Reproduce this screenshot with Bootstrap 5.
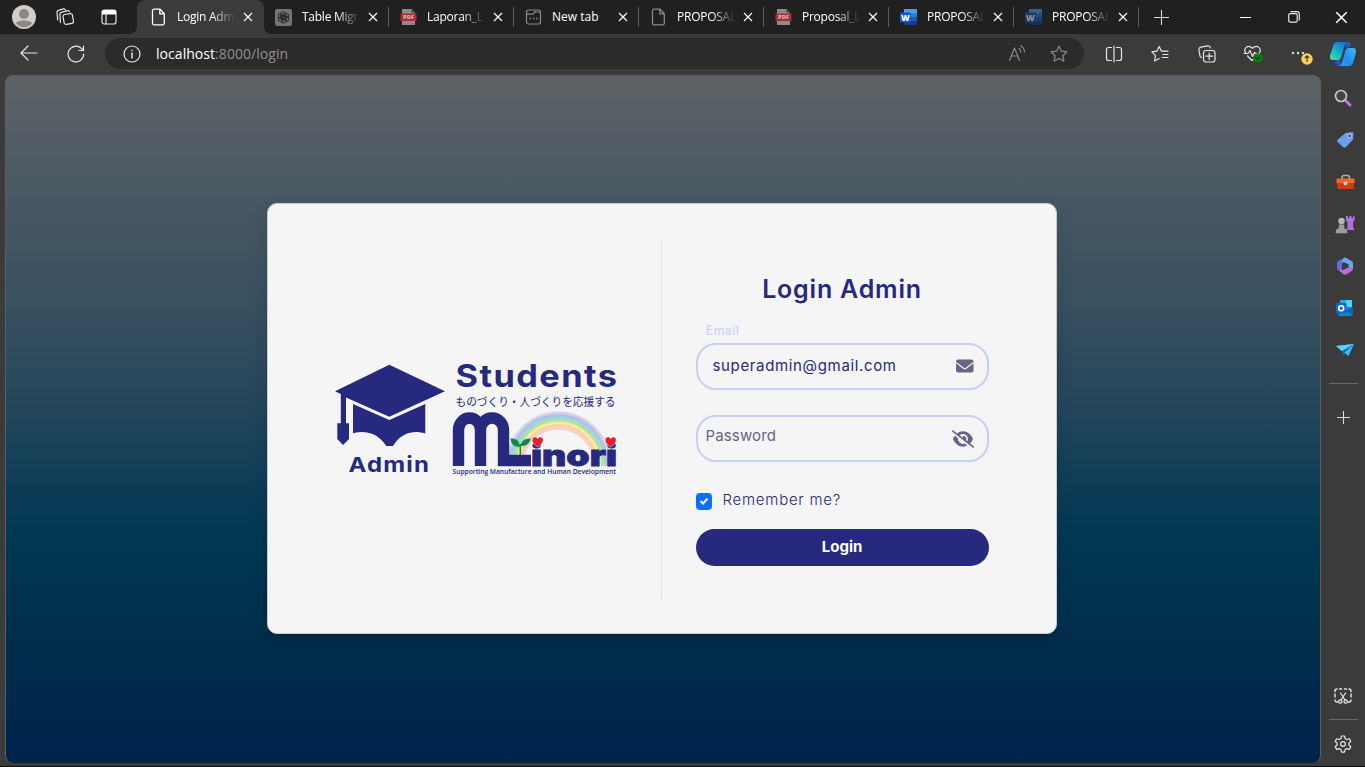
<!DOCTYPE html>
<html lang="en">
<head>
<meta charset="utf-8">
<meta name="viewport" content="width=device-width, initial-scale=1">
<title>Login Admin</title>
<link href="https://cdn.jsdelivr.net/npm/bootstrap@5.3.0/dist/css/bootstrap.min.css" rel="stylesheet">
<style>
:root{--navy:#27297e;--chrome:#3b3b3b}
html,body{height:100%;overflow:hidden}
body{background:var(--chrome);color:#fff;font-family:"Open Sans","Noto Sans",sans-serif;border-bottom:1px solid #0c0c0c}
svg{display:block;flex:none}
.ln{fill:none;stroke:#e6e6e6;stroke-width:1.2;stroke-linecap:round;stroke-linejoin:round}
.dim{stroke:#8a8a8a}
.titlebar{height:34px;background:#202020}
.lead-icons{width:139px}
.slot{display:flex;align-items:center;justify-content:center;flex:none}
.tab{width:125px;height:34px;padding-left:11px;position:relative;flex:none}
.tab>svg:first-child{width:17px}
.tab:not(.on):after{content:"";position:absolute;right:0;top:7px;width:1px;height:20px;background:#5a5a5a}
.tab.on{background:var(--chrome);border-radius:8px 8px 0 0;box-shadow:-2px 0 0 0 var(--chrome)}
.tab.on:before,.tab.on:after{content:"";position:absolute;bottom:0;width:7px;height:7px}
.tab.on:before{left:-9px;background:radial-gradient(circle at 0 0,transparent 6.5px,var(--chrome) 7px)}
.tab.on:after{right:-7px;background:radial-gradient(circle at 100% 0,transparent 6.5px,var(--chrome) 7px)}
.tab .cap{font-size:12px;letter-spacing:-.25px;line-height:16px;width:58px;margin-left:10px;white-space:nowrap;overflow:hidden;-webkit-mask-image:linear-gradient(90deg,#000 60%,transparent)}
.tab .cap.full{-webkit-mask-image:none}
.tab .x{margin-left:8px}
.toolbar{height:41px}
.address{width:979px;height:31px;border-radius:16px;background:#2b2b2b;margin-top:4px}
.url{font-size:14px;letter-spacing:.05px;line-height:18px;color:#8f8f8f}
.url b{font-weight:400;color:#fff}
.viewport{width:1316px;height:688px;margin-left:5px;border-radius:8px;border:1px solid #5a6065;border-bottom:0;
 background:linear-gradient(#5d6264 0,#5a6162 3%,#575e66 6%,#4f5b63 12%,#465763 20%,#38505f 33%,#26475b 47%,#0d3d56 60%,#003753 68%,#002e4c 82%,#00284c 91%,#00234c 100%)}
.login-card{width:790px;height:431px;margin-top:-2px;margin-left:-3px;padding:34px 35px 34px 33px;background:#f5f5f5;border:1px solid #c9ccce;border-radius:10px;box-shadow:0 8px 16px rgba(0,0,0,.15);font-family:Inter,"Open Sans",sans-serif;color:var(--navy)}
.form-side{border-left:1px solid #dfe0e2;padding:34px 32px 0 34px}
.heading{font-size:25px;font-weight:600;line-height:34px;letter-spacing:.8px}
.hint{font-size:12.5px;line-height:16px;letter-spacing:.35px;color:#ccd2ff;font-weight:500;padding-left:10px;margin-top:17px;margin-bottom:4px}
.pill{height:47px;border:2px solid #c7cefb;border-radius:20px}
.pill span{font-size:15px;line-height:20px}
.tick{width:16px;height:17px;border-radius:4px;background:#0d6efd}
.remember{font-size:15px;line-height:20px;font-weight:300}
.btn-login{height:37px;border-radius:19px;background:var(--navy);color:#fff;font-size:15px;font-weight:700;padding:0}
.btn-login:hover{background:#1e2068;color:#fff}
.side{width:44px;padding-top:2px}
.side .slot{height:42px;width:44px}
.side .rule{width:29px;height:1px;background:#686868}
</style>
</head>
<body class="d-flex flex-column">
<svg width="0" height="0" class="position-absolute">
 <defs>
  <symbol id="x" viewBox="0 0 10 10"><path d="M1 1l8 8M9 1L1 9" fill="none" stroke="#fff" stroke-width="1.2"/></symbol>
  <symbol id="page" viewBox="0 0 16 18"><path d="M3.500 1.200h6l4.300 4.500v9.600a1.500 1.500 0 0 1-1.500 1.500H3.500A1.500 1.500 0 0 1 2 15.300V2.700A1.500 1.500 0 0 1 3.500 1.200zM9.300 1.400v4.500h4.400" fill="none" stroke="currentColor" stroke-width="1.300"/></symbol>
  <symbol id="pdf" viewBox="0 0 16 16"><path d="M1.500 0h9.500l3.500 3.500V16h-13z" fill="#8b8b8b"/><path d="M11 0l3.500 3.500H11z" fill="#444"/><path d="M0 4.500h16v7.500H0z" fill="#a82f33"/><text x="8" y="10.400" font-size="5.800" font-weight="800" font-family="Open Sans" text-anchor="middle" fill="#d0b4b4">PDF</text></symbol>
  <symbol id="word" viewBox="0 0 17 16"><path d="M4 0h13v5H4z" fill="#41a5ee"/><path d="M4 4.500h13v4H4z" fill="#2b7cd3"/><path d="M4 8h13v4H4z" fill="#185abd"/><path d="M4 12h13v4H4z" fill="#103f91"/><rect y="3.500" width="11" height="10" rx="1" fill="#1656b9"/><text x="5.500" y="11.700" font-size="8.500" font-weight="800" font-family="Open Sans" text-anchor="middle" fill="#fff">W</text></symbol>
  <linearGradient id="cA" x1="0" y1="1" x2=".7" y2="0"><stop offset="0" stop-color="#5bdf86"/><stop offset=".45" stop-color="#15b9c8"/><stop offset="1" stop-color="#0a78e0"/></linearGradient>
  <linearGradient id="cB" x1="1" y1="0" x2="0" y2="1"><stop offset="0" stop-color="#43b8f8"/><stop offset=".6" stop-color="#1c8cf2"/><stop offset="1" stop-color="#20b5f0"/></linearGradient>
 </defs>
</svg>

<header class="titlebar d-flex align-items-center">
 <div class="lead-icons d-flex align-items-center">
  <div class="slot" style="width:48px"><svg width="24" height="24" viewBox="0 0 24 24"><circle cx="12" cy="12" r="12" fill="#d0cdca"/><circle cx="12" cy="9" r="5" fill="#8b8784"/><path d="M4 18.500c1-4 15-4 16 0a10.500 10.500 0 0 1-16 0z" fill="#8b8784"/></svg></div>
  <div class="slot" style="width:34px"><svg width="18" height="18" viewBox="0 0 18 18" class="ln"><rect x="7.500" y="6" width="9.500" height="10" rx="2" transform="rotate(-10 12 11)"/><path d="M4.500 14.500L3.900 6.600a2 2 0 0 1 1.500-2.200l6.300-1.700a1.500 1.500 0 0 1 1.800 1.100M1.700 12L1 4.500a2 2 0 0 1 1.500-2.200L7.500.9a1.500 1.500 0 0 1 1.800 1"/></svg></div>
  <div class="slot" style="width:54px"><svg width="16" height="16" viewBox="0 0 16 16"><rect x="1" y="1" width="14" height="14" rx="2.200" class="ln" stroke-width="1.600"/><path d="M1 3a2 2 0 0 1 2-2h10a2 2 0 0 1 2 2v2.500H1z" fill="#fff"/><path d="M5 5v10" class="ln"/></svg></div>
 </div>
 <nav class="d-flex">
  <div class="tab on d-flex align-items-center"><svg width="16" height="18"><use href="#page"/></svg><div class="cap">Login Adm</div><svg class="x" width="10" height="10"><use href="#x"/></svg></div>
  <div class="tab d-flex align-items-center"><svg width="17" height="17" viewBox="0 0 17 17"><rect width="17" height="17" rx="2" fill="#747474"/><g fill="none" stroke="#292929" stroke-width="1"><path id="petal" d="M6 9.800V5.500a2.700 2.700 0 0 1 5-1.300L7.300 6.300v3.500"/><use href="#petal" transform="rotate(60 8.500 8.500)"/><use href="#petal" transform="rotate(120 8.500 8.500)"/><use href="#petal" transform="rotate(180 8.500 8.500)"/><use href="#petal" transform="rotate(240 8.500 8.500)"/><use href="#petal" transform="rotate(300 8.500 8.500)"/></g></svg><div class="cap">Table Migr</div><svg class="x" width="10" height="10"><use href="#x"/></svg></div>
  <div class="tab d-flex align-items-center"><svg width="16" height="16"><use href="#pdf"/></svg><div class="cap">Laporan_L</div><svg class="x" width="10" height="10"><use href="#x"/></svg></div>
  <div class="tab d-flex align-items-center"><svg width="16" height="16" viewBox="0 0 16 16"><path d="M3 1h5.500L10 3h3.500A1.500 1.500 0 0 1 15 4.500v8.500a2 2 0 0 1-2 2H3a2 2 0 0 1-2-2V3a2 2 0 0 1 2-2zM1 5.200h6.500L9.500 3M10 1h3a2 2 0 0 1 2 2" class="ln dim"/><path d="M4 9.500h1.500M7.300 9.500h1.500M10.600 9.500h1.500" stroke="#8a8a8a" stroke-width="1.500"/></svg><div class="cap full" style="letter-spacing:0">New tab</div><svg class="x" width="10" height="10"><use href="#x"/></svg></div>
  <div class="tab d-flex align-items-center"><svg width="16" height="18" style="color:#8a8a8a"><use href="#page"/></svg><div class="cap">PROPOSAL</div><svg class="x" width="10" height="10"><use href="#x"/></svg></div>
  <div class="tab d-flex align-items-center"><svg width="16" height="16"><use href="#pdf"/></svg><div class="cap">Proposal_L</div><svg class="x" width="10" height="10"><use href="#x"/></svg></div>
  <div class="tab d-flex align-items-center"><svg width="17" height="16"><use href="#word"/></svg><div class="cap">PROPOSAL</div><svg class="x" width="10" height="10"><use href="#x"/></svg></div>
  <div class="tab d-flex align-items-center"><svg width="17" height="16" opacity=".5"><use href="#word"/></svg><div class="cap">PROPOSAL</div><svg class="x" width="10" height="10"><use href="#x"/></svg></div>
 </nav>
 <div class="slot" style="width:45px"><svg width="15" height="15" viewBox="0 0 15 15"><path d="M7.500 0v15M0 7.500h15" stroke="#ddd" stroke-width="1.100"/></svg></div>
 <div class="ms-auto d-flex">
  <div class="slot" style="width:48px"><svg width="11" height="11" viewBox="0 0 11 11"><path d="M0 5.500h11" stroke="#fff"/></svg></div>
  <div class="slot" style="width:49px"><svg width="12" height="12" viewBox="0 0 12 12" class="ln"><rect x=".7" y="2.700" width="8.500" height="8.500" rx="1.500"/><path d="M3 .7h6a2.300 2.300 0 0 1 2.300 2.300v6"/></svg></div>
  <div class="slot" style="width:47px"><svg width="13" height="13"><use href="#x"/></svg></div>
 </div>
</header>

<div class="toolbar d-flex">
 <div class="slot" style="width:58px;height:38px"><svg width="18" height="16" viewBox="0 0 18 16" class="ln"><path d="M17 8H1.200M8 1L1 8l7 7"/></svg></div>
 <div class="slot" style="width:35px;height:39px"><svg width="18" height="18" viewBox="0 0 18 18" class="ln"><path d="M16.700 9a7.800 7.800 0 1 1-2.500-5.700L16.300 5M16.500 1v4.500H12"/></svg></div>
 <div class="address d-flex align-items-center" style="margin-left:12px">
  <div class="slot" style="width:54px"><svg width="18" height="18" viewBox="0 0 18 18" class="ln"><circle cx="9" cy="9" r="8"/><path d="M9 8v5M9 5.200v.2" stroke-width="1.500"/></svg></div>
  <div class="url" style="margin-left:-3px"><b>localhost</b>:8000/login</div>
  <div class="slot ms-auto" style="width:34px"><svg width="18" height="17" viewBox="0 0 18 17" class="ln dim"><path d="M1.500 15.500L6.500 3l5 12.500M3.200 11h6.600M11 3.500c1.200.8 1.800 2 1.800 3.500M12.500.8C15 2.200 16.500 4.200 16.500 7"/></svg></div>
  <div class="slot" style="width:50px;height:31px"><svg width="18" height="18" viewBox="0 0 18 18" class="ln dim"><path d="M9 1.200l2.400 5 5.500.7-4 3.800 1 5.500L9 13.500l-4.900 2.700 1-5.500-4-3.800 5.500-.7z"/></svg></div>
 </div>
 <div class="slot" style="width:59px;height:39px"><svg width="18" height="18" viewBox="0 0 18 18" class="ln"><path d="M6.500 2.500h-3a2 2 0 0 0-2 2v9a2 2 0 0 0 2 2h3M11.500 2.500h3a2 2 0 0 1 2 2v9a2 2 0 0 1-2 2h-3M9 1v16"/></svg></div>
 <div class="slot" style="width:34px;height:39px"><svg width="18" height="18" viewBox="0 0 18 18" class="ln"><path d="M10.500 6.200h6.500M12 9.500h5M11 12.500h6M10.500 6.200L8.200 1.500 5.800 6.200.9 6.900l3.600 3.700-.9 5.400 4.600-2.500"/></svg></div>
 <div class="slot" style="width:59px;height:39px"><svg width="18" height="18" viewBox="0 0 18 18" class="ln"><rect x="5.500" y="5.500" width="11.500" height="11.500" rx="2.500"/><path d="M11.200 8v6.500M8 11.200h6.500M3.500 12.500A2.500 2.500 0 0 1 1.800 10L1 5a2.500 2.500 0 0 1 2-2.900l6.500-1.200A2.500 2.500 0 0 1 12.400 3"/></svg></div>
 <div class="slot" style="width:34px;height:39px"><svg width="20" height="18" viewBox="0 0 20 18" class="ln"><path d="M3 8.500C-.5 3.500 5-1 9.500 3.200 14-1 19.500 3.500 16 8.500M4.500 11l4.500 4.500 1-1M1 8.500h4l2-3 2.500 6 2-4 1 1h3"/><circle cx="15" cy="13" r="4.700" fill="#107c10" stroke="none"/><path d="M13 13l1.500 1.500 2.600-2.700" style="stroke:#074f07"/></svg></div>
 <div class="slot" style="width:60px;height:39px"><svg width="26" height="22" viewBox="0 0 26 22"><g fill="#ddd"><circle cx="6" cy="10" r="1.200"/><circle cx="11" cy="10" r="1.200"/><circle cx="16" cy="10" r="1.200"/></g><circle cx="20" cy="16" r="5.700" fill="#fdd05a"/><path d="M20 19v-5.500M17.800 15l2.200-2.200 2.200 2.200" fill="none" stroke="#4a3a10" stroke-width="1.200"/></svg></div>
 <div class="slot" style="width:26px;height:39px"><svg width="28" height="26" viewBox="0 0 28 26"><path d="M10 17l4 8h-4c-3 0-3.500-2-4-5z" fill="#2451c8"/><path d="M14 1h5c2 0 2.500 1.500 3 4l-4 2z" fill="#1460c4"/><path d="M8.500 1H19c-2 0-2.700 1-3.300 3l-3.500 12c-.7 2-1.700 3-3.700 3H4c-3 0-3.500-2.200-2.800-5L4.500 4C5.200 2 6.500 1 8.500 1z" fill="url(#cA)"/><path d="M20 25H9.500c2 0 2.700-1 3.300-3l3.500-12c.7-2 1.700-3 3.700-3H24c3 0 3.500 2.200 2.800 5L24 22c-.7 2-2 3-4 3z" fill="url(#cB)"/></svg></div>
</div>

<div class="d-flex">
 <main class="viewport d-flex align-items-center justify-content-center">
  <section class="login-card">
   <div class="row g-0 h-100">
    <div class="col-6 d-flex align-items-center justify-content-center" style="padding-right:10px;padding-bottom:2px">
     <svg width="300" height="130" viewBox="326 353 300 130" font-family="Inter,'Open Sans',sans-serif">
      <g fill="#27297e">
       <path d="M389.300 364.700L445 391.300 389.300 416.700 346 397.500V423.300h3V439l-6 6-5.700-6V423.300h3.500V394L335 391.300z"/>
       <path d="M353 404l36.300 16 36-16v29.500c-12-4-23 0-29.500 8.500l-3 4h-6.500l-3-4c-7-8.500-18-12-30.300-8.700z"/>
       <text x="348.500" y="472" font-size="20.500" font-weight="700" letter-spacing="1" textLength="81.500" lengthAdjust="spacingAndGlyphs">Admin</text>
       <text x="455.500" y="387" font-size="31" font-weight="700" letter-spacing="1.300" textLength="163" lengthAdjust="spacingAndGlyphs">Students</text>
       <text x="455.500" y="405.500" font-size="11.500" font-weight="400" textLength="160" lengthAdjust="spacingAndGlyphs" font-family="'Noto Sans CJK JP',sans-serif">ものづくり・人づくりを応援する</text>
      </g>
      <g fill="none" stroke-width="2.800">
       <path d="M507 466a51.500 53 0 0 1 103 0" stroke="#dccfe8"/>
       <path d="M509.500 466a49 50.500 0 0 1 98 0" stroke="#a9c4e8"/>
       <path d="M512 466a46.500 48 0 0 1 93 0" stroke="#9fd6d8"/>
       <path d="M514.500 466a44 45.500 0 0 1 88 0" stroke="#b7dfa5"/>
       <path d="M517 466a41.500 43 0 0 1 83 0" stroke="#f3efa0"/>
       <path d="M519.500 466a39 40.500 0 0 1 78 0" stroke="#f9d3a0"/>
       <path d="M522 466a36.500 38 0 0 1 73 0" stroke="#f8cfcb"/>
      </g>
      <path d="M458.500 466V430a11 12 0 0 1 22 0V466M480.500 430a11.500 12 0 0 1 23 0V460.500H531" fill="none" stroke="#27297e" stroke-width="11.400"/>
      <text x="531" y="465.700" font-size="29" font-weight="900" fill="#27297e" stroke="#27297e" stroke-width=".8" textLength="86" lengthAdjust="spacingAndGlyphs">inori</text>
      <path d="M520.300 455V444" stroke="#0f8a4a" stroke-width="1.500"/>
      <path d="M520 447c-6 0-9-3-9.500-8.500 6 0 9 2 9.500 8.500zM520.600 446c.5-5 4-8 10.200-7.500-1 5.500-5 8-10.200 7.500z" fill="#0f8a4a"/>
      <path id="heart" d="M537.700 447c-3-2-5.500-4-5.500-7 0-3.500 4.500-4 5.500-1.200 1-2.800 5.500-2.300 5.500 1.200 0 3-2.500 5-5.500 7z" fill="#ec1c2b" stroke="#f5f5f5" stroke-width=".5"/>
      <use href="#heart" x="73"/>
      <text x="452.500" y="474.200" font-size="6.800" font-weight="600" fill="#27297e" font-family="'Open Sans',sans-serif" textLength="163.500" lengthAdjust="spacingAndGlyphs">Supporting Manufacture and Human Development</text>
     </svg>
    </div>
    <div class="col-6 form-side">
     <h1 class="heading text-center mb-0">Login Admin</h1>
     <div class="hint">Email</div>
     <div class="pill d-flex align-items-center justify-content-between"><span style="padding-left:15px;letter-spacing:.65px;margin-top:-2px">superadmin@gmail.com</span>
      <svg width="18" height="14" viewBox="0 0 18 14" style="margin-right:13px;margin-top:-2px"><rect y=".5" width="17.500" height="13" rx="2" fill="#6b6384"/><path d="M0 3.500l7.500 5.700q1.300.9 2.600 0L17.500 3.500" fill="none" stroke="#f5f5f5" stroke-width="1.200"/></svg></div>
     <div class="pill d-flex align-items-center justify-content-between" style="margin-top:25px"><span style="padding-left:8px;margin-top:-5px;letter-spacing:.15px;color:#6b6384">Password</span>
      <svg width="22" height="18" viewBox="0 0 640 512" style="margin-right:13px"><path fill="#6b6384" d="M38.800 5.100C28.400-3.100 13.300-1.200 5.100 9.200S-1.200 34.700 9.200 42.900l592 464c10.400 8.200 25.500 6.300 33.700-4.100s6.300-25.500-4.100-33.700L525.600 386.700c39.600-40.600 66.400-86.100 79.900-118.400c3.300-7.900 3.300-16.700 0-24.600c-14.900-35.700-46.200-87.700-93-131.100C465.500 68.800 400.800 32 320 32c-68.200 0-125 26.300-169.300 60.800L38.800 5.100zM223.100 149.500C248.600 126.200 282.700 112 320 112c79.500 0 144 64.500 144 144c0 24.900-6.300 48.300-17.400 68.700L408 294.500c8.400-19.300 10.600-41.400 4.800-63.300c-11.100-41.500-47.800-69.400-88.600-71.100c-5.800-.2-9.200 6.100-7.400 11.700c2.100 6.400 3.300 13.200 3.300 20.300c0 10.200-2.400 19.800-6.600 28.300l-90.300-70.800zM373 389.900c-16.400 6.500-34.300 10.100-53 10.100c-79.500 0-144-64.500-144-144c0-6.900 .5-13.600 1.400-20.200L83.100 161.500C60.300 191.200 44 220.800 34.500 243.700c-3.300 7.900-3.300 16.700 0 24.600c14.900 35.700 46.200 87.700 93 131.100C174.500 443.200 239.200 480 320 480c47.800 0 89.900-12.900 126.200-32.500L373 389.900z"/></svg></div>
     <div class="d-flex align-items-center" style="margin-top:28px">
      <div class="tick slot" style="margin-top:2px"><svg width="10" height="10" viewBox="0 0 10 10"><path d="M1.500 5l2.500 2.500 4.500-4.800" fill="none" stroke="#fff" stroke-width="2"/></svg></div>
      <span class="remember" style="padding-left:11px;letter-spacing:.75px">Remember me?</span>
     </div>
     <button type="button" class="btn btn-login w-100" style="margin-top:19px">Login</button>
    </div>
   </div>
  </section>
 </main>

 <aside class="side d-flex flex-column align-items-center">
  <div class="slot"><svg width="18" height="18" viewBox="0 0 18 18"><circle cx="7" cy="7" r="5.500" fill="#444" stroke="#c8c8c8" stroke-width="1.700"/><path d="M10.500 10.500l2 2" stroke="#c8c8c8" stroke-width="2"/><path d="M12.500 12.500l3.500 3.500" stroke="#b07be0" stroke-width="3" stroke-linecap="round"/></svg></div>
  <div class="slot ps-1"><svg width="18" height="18" viewBox="0 0 18 18"><path d="M9.500 2L16 1q1.500 0 1.500 1.500L17 8.500 10 16q-1.500 1.500-3 0L1.500 11Q.5 9.800 1.500 8.700z" fill="#6f9dec"/><circle cx="13.500" cy="5" r="1.800" fill="#263a60" stroke="#d8e4fb" stroke-width=".9"/></svg></div>
  <div class="slot ps-1"><svg width="19" height="16" viewBox="0 0 18 16"><path d="M5.500 5V3.500q0-2 2-2h3.500q2 0 2 2V5" fill="none" stroke="#b5b5b5" stroke-width="1.500"/><rect x="0" y="4.500" width="18" height="5" rx="1" fill="#f4662c"/><path d="M.8 9.300h16.400V14q0 1-1 1H1.800q-1 0-1-1z" fill="#cf3d13"/><circle cx="9" cy="9.300" r="1.900" fill="#ccc"/></svg></div>
  <div class="slot ps-1"><svg width="20" height="20" viewBox="0 0 20 20"><path d="M11 2h2v2h1.500V2h2v2H18V2h1.500v4.500L18 8v5l1.500 3h-8l1-3V8L11 6.500z" fill="#ad73dd"/><circle cx="6.500" cy="7" r="3.200" fill="#b9b9b9"/><path d="M3.500 10.500h6L9 12l1 3h1.500l1 3.500q0 .8-1 .8H1.500q-1 0-1-.8l1-3.500H3l1-3z" fill="#9c9c9c"/></svg></div>
  <div class="slot ps-1"><svg width="18" height="18" viewBox="0 0 18 18"><path d="M8.500.5l-6 3.200Q1 4.500 1 6v6l5 1.500V7.500q0-1.300 1.200-2L12 3z" fill="#6b68e0"/><path d="M9 .3l6.500 3.600Q17 4.800 17 6.500V12l-4.500-1.500V7.300L7.500 5l-1.500.5Q6 2 9 .3z" fill="#64a8f0"/><path d="M1.200 12l6 5q1.800 1 3.500.2l5-3.200q1.200-.8 1.300-2.500l-4.500-1L7 13z" fill="#b66fd3"/></svg></div>
  <div class="slot ps-1"><svg width="18" height="18" viewBox="0 0 18 18"><rect x="4" y="1" width="12" height="14" rx="1" fill="#29a7ea"/><path d="M10 1h6v7h-6z" fill="#50d0ff"/><path d="M2.500 8L17 8v8q0 1-1 1H3.500q-1 0-1-1z" fill="#1585d6"/><path d="M10 11.500L17 8v9z" fill="#0d64b5"/><rect x="0" y="4" width="10.500" height="10.500" rx="1" fill="#0a6cc4"/><circle cx="5.200" cy="9.200" r="2.500" fill="none" stroke="#fff" stroke-width="1.600"/></svg></div>
  <div class="slot ps-1"><svg width="18" height="14" viewBox="0 0 18 14"><path d="M0 3L18 1 12.500 13 7.500 9.500z" fill="#38b6f2"/><path d="M0 3L18 1 6 8z" fill="#5ed0ff"/><path d="M6 8L18 1 8 10l-.5 3.500z" fill="#0e6fb8"/></svg></div>
  <div class="rule" style="margin-top:12px"></div>
  <div class="slot" style="height:66px"><svg width="13" height="13" viewBox="0 0 13 13"><path d="M6.500 0v13M0 6.500h13" stroke="#d8d8d8" stroke-width="1.100"/></svg></div>
  <div class="slot mt-auto" style="height:46px"><svg width="18" height="16" viewBox="0 0 18 16" class="ln"><path d="M4 14H3a2 2 0 0 1-2-2M1 9V6M1 3.500A2 2 0 0 1 3 1M5.500 1h2M10.500 1h2M15 1a2 2 0 0 1 2 2.500M17 6v3M17 12a2 2 0 0 1-2 2h-1" stroke-width="1.400"/><path d="M6.500 5l4.500 7M11.500 5L7 12"/><circle cx="6.300" cy="13.500" r="1.700"/><circle cx="11.700" cy="13.500" r="1.700"/></svg></div>
  <div class="rule"></div>
  <div class="slot" style="height:43px;padding-top:5px"><svg width="18" height="18" viewBox="0 0 18 18" class="ln"><path d="M7.500 1h3l.6 2.500 1.700 1 2.500-.8 1.500 2.600-1.900 1.800v1.900l1.900 1.800-1.500 2.600-2.500-.8-1.700 1-.6 2.500h-3l-.6-2.500-1.700-1-2.500.8-1.500-2.600 1.900-1.800V8.100L1.200 6.300l1.500-2.600 2.500.8 1.700-1z"/><circle cx="9" cy="9" r="2.400"/></svg></div>
 </aside>
</div>
<script src="https://cdn.jsdelivr.net/npm/bootstrap@5.3.0/dist/js/bootstrap.bundle.min.js"></script>
</body>
</html>
